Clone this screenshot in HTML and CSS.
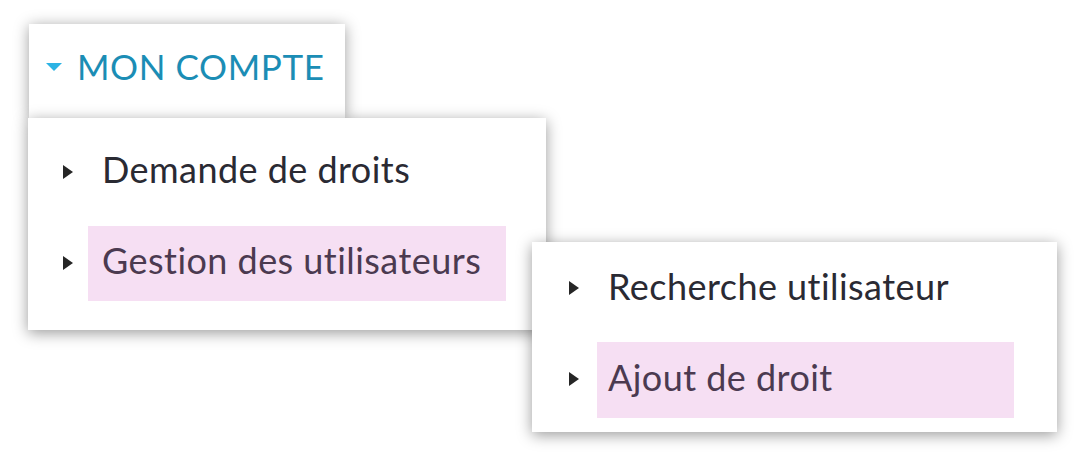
FILE: index.html
```html
<!DOCTYPE html>
<html lang="fr">
<head>
<meta charset="utf-8">
<title>Mon compte</title>
<link rel="stylesheet" href="styles.css">
</head>
<body>
<div class="stage">
  <div class="account">
    <span class="caret-down"></span>
    <span class="account-label">MON COMPTE</span>
  </div>
  <div class="menu menu-main">
    <ul class="items">
      <li class="item"><span class="caret-right"></span><a class="link">Demande de droits</a></li>
      <li class="item"><span class="caret-right"></span><a class="link active">Gestion des utilisateurs</a></li>
    </ul>
    <div class="menu menu-sub">
      <ul class="items">
        <li class="item"><span class="caret-right"></span><a class="link">Recherche utilisateur</a></li>
        <li class="item"><span class="caret-right"></span><a class="link active">Ajout de droit</a></li>
      </ul>
    </div>
  </div>
</div>
</body>
</html>
```

FILE: styles.css
```css
* { box-sizing: border-box; }
html, body { margin: 0; padding: 0; background: #ffffff; }
body { font-family: Lato, "Open Sans", sans-serif; width: 1086px; height: 457px; overflow: hidden; }

.stage { padding: 24px 0 0 28px; }

.account {
  position: relative;
  z-index: 1;
  margin-left: 1px;
  width: 316px;
  height: 94px;
  background: #fff;
  box-shadow: 0 2px 14px rgba(0,0,0,0.38);
  display: flex;
  align-items: center;
  padding: 0 0 10px 17px;
}
.caret-down {
  width: 0; height: 0;
  border-left: 8px solid transparent;
  border-right: 8px solid transparent;
  border-top: 8px solid #2cb3e4;
  margin-right: 15px;
  margin-top: 2px;
}
.account-label {
  font-size: 35px;
  color: #1b8db5;
  letter-spacing: 0.6px;
}

.menu {
  background: #fff;
  box-shadow: 0 3px 14px rgba(0,0,0,0.4);
}
.menu-main {
  position: relative;
  z-index: 2;
  width: 518px;
  height: 212px;
  padding: 17px 40px 0 35px;
}
.menu-sub {
  position: absolute;
  left: 504px;
  top: 124px;
  width: 525px;
  height: 190px;
  padding: 9px 43px 0 37px;
}
.items { list-style: none; margin: 0; padding: 0; display: flex; flex-direction: column; gap: 16px; }
.menu-sub .items { gap: 15px; }
.item { display: flex; align-items: center; height: 75px; }
.menu-sub .item { height: 76px; }
.caret-right {
  flex: none;
  width: 0; height: 0;
  border-top: 7px solid transparent;
  border-bottom: 7px solid transparent;
  border-left: 10px solid #262626;
  margin-right: 15px;
  margin-top: -2px;
}
.menu-sub .caret-right { margin-right: 18px; }
.link {
  flex: 1;
  height: 100%;
  display: flex;
  align-items: center;
  padding: 0 0 7px 14px;
  font-size: 36px;
  color: #2a2a33;
  letter-spacing: 0.45px;
}
.menu-sub .link { padding-left: 11px; }
.link.active { background: #f6dff3; color: #4b3a50; }
```
